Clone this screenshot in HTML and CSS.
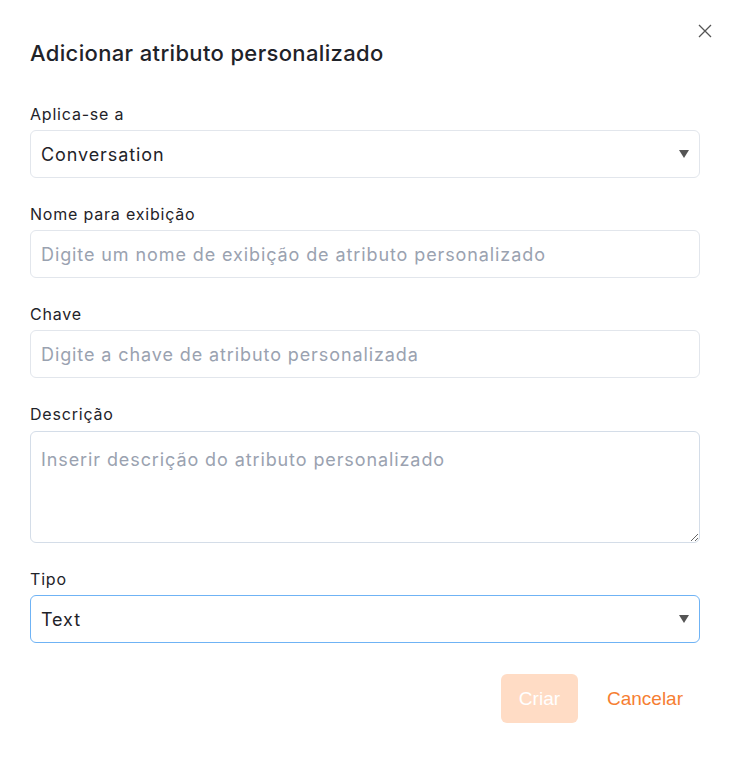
FILE: index.html
```html
<!DOCTYPE html>
<html lang="pt">
<head>
<meta charset="utf-8">
<link rel="stylesheet" href="styles.css">
</head>
<body>
<div class="modal">
  <button class="close" aria-label="Fechar">
    <svg width="14" height="14" viewBox="0 0 14 14"><path d="M1 1L13 13M13 1L1 13" stroke="#555" stroke-width="1.3" fill="none"/></svg>
  </button>
  <h2 class="title">Adicionar atributo personalizado</h2>
  <form class="form">
    <label class="field">
      <span class="label">Aplica-se a</span>
      <div class="select"><span>Conversation</span><svg class="caret" width="10" height="8" viewBox="0 0 10 8"><path d="M0 0H10L5 8Z" fill="#555"/></svg></div>
    </label>
    <label class="field">
      <span class="label">Nome para exibição</span>
      <input class="input" type="text" placeholder="Digite um nome de exibição de atributo personalizado">
    </label>
    <label class="field">
      <span class="label">Chave</span>
      <input class="input" type="text" placeholder="Digite a chave de atributo personalizada">
    </label>
    <label class="field">
      <span class="label">Descrição</span>
      <textarea class="textarea" placeholder="Inserir descrição do atributo personalizado"></textarea>
    </label>
    <label class="field">
      <span class="label">Tipo</span>
      <div class="select focused"><span>Text</span><svg class="caret" width="10" height="8" viewBox="0 0 10 8"><path d="M0 0H10L5 8Z" fill="#555"/></svg></div>
    </label>
    <div class="actions">
      <button type="button" class="btn primary">Criar</button>
      <button type="button" class="btn link">Cancelar</button>
    </div>
  </form>
</div>
</body>
</html>
```
FILE: styles.css
```css
* { box-sizing: border-box; }
html, body { margin: 0; padding: 0; background: #fff; }
body { font-family: Inter, "Noto Sans", sans-serif; color: #1f2937; }
.modal { position: relative; width: 738px; padding: 37px 38px 0 30px; }
.close { position: absolute; top: 24px; right: 26px; width: 14px; height: 14px; padding: 0; border: 0; background: none; display: flex; }
.title { margin: 0; font-size: 22px; font-weight: 500; line-height: 32px; color: #1f2329; letter-spacing: 0.35px; }
.form { display: flex; flex-direction: column; gap: 24px; margin-top: 33px; }
.field { display: flex; flex-direction: column; gap: 4px; }
.label { font-size: 16px; line-height: 24px; color: #1f2329; font-weight: 400; letter-spacing: 0.8px; }
.input, .select, .textarea {
  width: 100%; height: 48px; border: 1px solid #e2e6ec; border-radius: 6px;
  padding: 0 10px; font-family: inherit; font-size: 18px; color: #1f2329; background: #fff; outline: none;
  letter-spacing: 0.9px; flex-shrink: 0;
}
.input::placeholder, .textarea::placeholder { color: #9aa2b0; }
.select { display: flex; align-items: center; justify-content: space-between; padding: 0 10px 0 10px; }
.focused { border-color: #6fb3f5; }
.textarea { height: 112px; margin-top: 1px; padding: 15px 10px; resize: vertical; line-height: 26px; display: block; border-color: #d4dde8; }
.actions { display: flex; justify-content: flex-end; align-items: center; gap: 10px; margin-top: 7px; }
.btn { font-family: "Liberation Sans", Arial, sans-serif; font-size: 19px; border: 0; border-radius: 6px; height: 49px; cursor: pointer; }
.primary { width: 77px; background: #ffdcc5; color: #fff; }
.link { background: none; color: #f67e32; padding: 0 17px 0 19px; }
```
